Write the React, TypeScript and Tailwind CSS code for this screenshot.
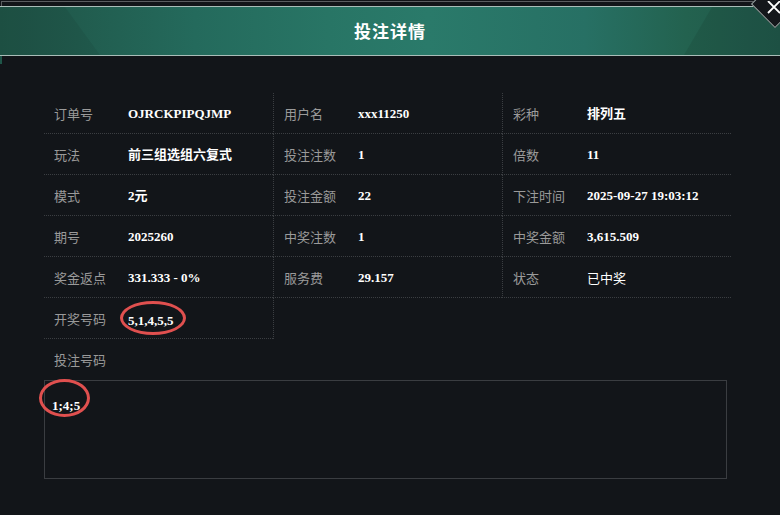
import React from "react";

const LABEL = "font-['Noto_Sans_CJK_SC','Noto_Sans',sans-serif]";
const VALUE = "font-['Liberation_Serif','Noto_Sans_CJK_SC',serif]";

type Cell = { label: string; value: string; plain?: boolean };

const rows: Cell[][] = [
  [
    { label: "订单号", value: "OJRCKPIPQJMP" },
    { label: "用户名", value: "xxx11250" },
    { label: "彩种", value: "排列五" },
  ],
  [
    { label: "玩法", value: "前三组选组六复式" },
    { label: "投注注数", value: "1" },
    { label: "倍数", value: "11" },
  ],
  [
    { label: "模式", value: "2元" },
    { label: "投注金额", value: "22" },
    { label: "下注时间", value: "2025-09-27 19:03:12" },
  ],
  [
    { label: "期号", value: "2025260" },
    { label: "中奖注数", value: "1" },
    { label: "中奖金额", value: "3,615.509" },
  ],
  [
    { label: "奖金返点", value: "331.333 - 0%" },
    { label: "服务费", value: "29.157" },
    { label: "状态", value: "已中奖", plain: true },
  ],
];

function CellView({ c, col }: { c: Cell; col: number }) {
  return (
    <div
      className={
        "h-[41px] flex items-center pt-[2px] border-b border-dotted border-[#3b3e42] " +
        (col > 0 ? "border-l " : "")
      }
    >
      <div className={"w-[84px] pl-[10px] text-[13px] text-[#9a9a9a] " + LABEL}>
        {c.label}
      </div>
      <div
        className={
          "text-[13px] text-white " +
          (c.plain ? LABEL + " font-normal" : VALUE + " font-bold")
        }
      >
        {c.value}
      </div>
    </div>
  );
}

export default function App() {
  return (
    <div className="relative w-[780px] h-[515px] overflow-hidden bg-[#121519]">
      {/* outer frame line */}
      <div className="h-[6px] pt-[1px] pl-[1px]">
        <div className="h-[5px] border-t border-l border-[#5a5d60]" />
      </div>
      {/* header */}
      <div className="relative h-[50px] border-t border-b border-[#a9bdb8] bg-[linear-gradient(90deg,#1f5447_0%,#215c4e_10%,#246a5c_25%,#287565_42%,#2a7a6a_55%,#277064_75%,#23624f_88%,#205749_100%)] flex items-center justify-center overflow-hidden">
        <div className="absolute inset-0 bg-[rgba(0,0,0,0.06)] [clip-path:polygon(0_0,65px_0,100px_100%,0_100%)]" />
        <div className="absolute inset-0 bg-[rgba(0,0,0,0.08)] [clip-path:polygon(712px_0,100%_0,100%_100%,684px_100%)]" />
        <span
          className={
            "relative text-[17px] font-bold text-white tracking-[1px] " + LABEL
          }
        >
          投注详情
        </span>
      </div>
      <div className="absolute left-0 top-[56px] h-[8px] w-[2px] bg-[#1f5649]" />

      {/* close button */}
      <div className="absolute left-[758px] top-[-13px] w-[34px] h-[34px] rotate-45 bg-[#14171b] border border-[#9aa5a3]" />
      <svg
        className="absolute left-[767px] top-[1px]"
        width="13"
        height="13"
        viewBox="0 0 13 13"
      >
        <path d="M1 0 L13 12 M13 0 L1 12" stroke="#ffffff" strokeWidth="1.8" />
      </svg>

      {/* content */}
      <div className="pl-[44px] pt-[37px]">
        <div className="grid grid-cols-[229px_229px_229px] w-[687px]">
          {rows.map((r, i) =>
            r.map((c, j) => <CellView key={i + "-" + j} c={c} col={j} />)
          )}
          <div className="h-[41px] flex items-center pt-[2px] border-b border-dotted border-[#3b3e42]">
            <div className={"w-[84px] pl-[10px] text-[13px] text-[#9a9a9a] " + LABEL}>
              开奖号码
            </div>
            <div className="relative">
              <span className={"text-[13px] text-white font-bold " + VALUE}>
                5,1,4,5,5
              </span>
              <div className="absolute left-[-8px] top-[-6px] w-[66px] h-[34px] rounded-[50%] border-[3px] border-[#e0504f]" />
            </div>
          </div>
          <div className="h-[41px] border-l border-dotted border-[#3b3e42]" />
        </div>

        <div className={"mt-[11px] h-[20px] leading-[20px] pl-[10px] text-[13px] text-[#9a9a9a] " + LABEL}>
          投注号码
        </div>
        <div className="relative mt-[10px] w-[683px] h-[99px] border border-[#3a3d41] bg-[#121519] pl-[7px] pt-[11px]">
          <span className={"text-[13px] leading-[16px] text-white font-bold " + VALUE}>
            1;4;5
          </span>
          <div className="absolute left-[-6px] top-[-2px] w-[51px] h-[38px] rounded-[50%] border-[3px] border-[#e0504f]" />
        </div>
      </div>
    </div>
  );
}
